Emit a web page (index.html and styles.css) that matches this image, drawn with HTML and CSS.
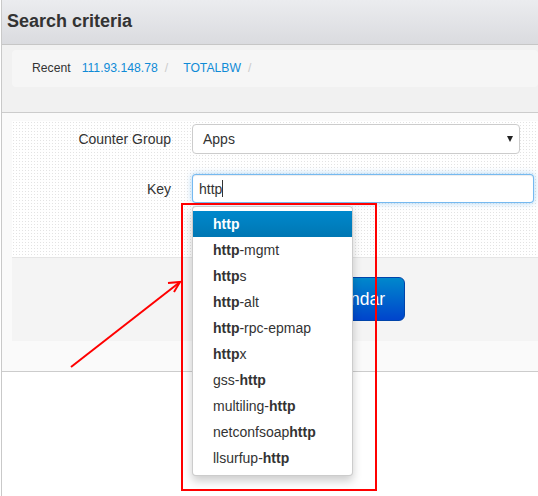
FILE: index.html
```html
<!DOCTYPE html>
<html>
<head>
<meta charset="utf-8">
<link rel="stylesheet" href="styles.css">
</head>
<body>
<div class="page">
  <div class="panel">
    <div class="panel-head"><h2 class="title">Search criteria</h2></div>
    <div class="recent-bar">
      <ul class="crumbs">
        <li class="crumb-label">Recent</li>
        <li><a href="#">111.93.148.78</a><span class="divider">/</span></li>
        <li><a href="#">TOTALBW</a><span class="divider">/</span></li>
      </ul>
    </div>
    <div class="panel-body">
      <form class="search-form">
        <div class="fields">
          <div class="field-row">
            <label class="field-label">Counter Group</label>
            <div class="select-box"><span>Apps</span><span class="select-caret"></span></div>
          </div>
          <div class="field-row">
            <label class="field-label">Key</label>
            <div class="control">
              <div class="text-input is-focused"><span>http</span><span class="text-cursor"></span></div>
              <ul class="typeahead">
                <li class="active"><strong>http</strong></li>
                <li><strong>http</strong>-mgmt</li>
                <li><strong>http</strong>s</li>
                <li><strong>http</strong>-alt</li>
                <li><strong>http</strong>-rpc-epmap</li>
                <li><strong>http</strong>x</li>
                <li>gss-<strong>http</strong></li>
                <li>multiling-<strong>http</strong></li>
                <li>netconfsoap<strong>http</strong></li>
                <li>llsurfup-<strong>http</strong></li>
              </ul>
            </div>
          </div>
        </div>
        <div class="form-actions">
          <button type="button" class="btn-primary">Calendar</button>
        </div>
      </form>
    </div>
  </div>
  <svg class="annotation" width="538" height="496" viewBox="0 0 538 496">
    <rect x="182" y="204" width="194" height="286" fill="none" stroke="#ff0000" stroke-width="2"/>
    <line x1="71" y1="367" x2="180" y2="282" stroke="#ff0000" stroke-width="2"/>
    <polyline points="168,283 180,282 174,292" fill="none" stroke="#ff0000" stroke-width="2"/>
  </svg>
</div>
</body>
</html>
```
FILE: styles.css
```css
html, body {
  margin: 0;
  padding: 0;
  background: #ffffff;
}

body {
  font-family: "Liberation Sans", Arial, sans-serif;
  color: #333333;
  font-size: 14px;
}

.page {
  position: relative;
  width: 538px;
  height: 496px;
  overflow: hidden;
  padding-left: 1px;
  box-sizing: border-box;
}

.panel {
  border-left: 1px solid #c9c9c9;
  height: 100%;
}

.panel-head {
  height: 45px;
  box-sizing: border-box;
  border-bottom: 1px solid #c6c6c6;
  background: linear-gradient(#ebecef, #dadbdf);
  padding-left: 5px;
}

.title {
  margin: 0;
  font-size: 18px;
  font-weight: bold;
  line-height: 43px;
  color: #333333;
}

.recent-bar {
  height: 68px;
  box-sizing: border-box;
  background: #f1f1f1;
  border-bottom: 1px solid #cccccc;
  padding: 5px 0 0 10px;
}

.crumbs {
  list-style: none;
  margin: 0;
  height: 37px;
  box-sizing: border-box;
  padding: 8px 20px;
  background: #f6f6f6;
  border-radius: 4px;
  display: flex;
  font-size: 12.2px;
  line-height: 21px;
}

.crumbs li {
  display: flex;
}

.crumb-label {
  color: #333333;
  margin-right: 11px;
}

.crumbs a {
  color: #0f8bd6;
  text-decoration: none;
}

.divider {
  color: #cccccc;
  margin: 0 15px 0 7px;
}

.panel-body {
  height: 259px;
  box-sizing: border-box;
  background: #fafafa;
  border-bottom: 1px solid #cccccc;
  padding: 8px 0 0 10px;
}

.search-form {
  margin: 0;
}

.fields {
  height: 136px;
  box-sizing: border-box;
  padding-top: 3px;
  background-color: #ffffff;
  background-image: radial-gradient(circle, #e3e3e3 0.7px, transparent 0.9px);
  background-size: 3px 3px;
}

.field-row {
  display: flex;
  align-items: flex-start;
  gap: 21px;
  margin-bottom: 20px;
}

.field-label {
  width: 159px;
  text-align: right;
  line-height: 20px;
  padding-top: 5px;
  color: #333333;
}

.select-box {
  width: 328px;
  height: 30px;
  box-sizing: border-box;
  border: 1px solid #cccccc;
  border-radius: 4px;
  background: #ffffff;
  display: flex;
  align-items: center;
  justify-content: space-between;
  padding: 0 6px 0 10px;
  line-height: 20px;
}

.select-caret {
  width: 0;
  height: 0;
  border-left: 3.5px solid transparent;
  border-right: 3.5px solid transparent;
  border-top: 6px solid #222222;
}

.control {
  position: relative;
}

.text-input {
  width: 342px;
  height: 29px;
  box-sizing: border-box;
  border: 1px solid rgba(82, 168, 236, 0.8);
  border-radius: 4px;
  background: #ffffff;
  box-shadow: inset 0 1px 1px rgba(0, 0, 0, 0.075), 0 0 6px rgba(82, 168, 236, 0.5);
  display: flex;
  align-items: center;
  padding: 0 6px;
  line-height: 20px;
  color: #333333;
}

.text-cursor {
  display: inline-block;
  width: 1px;
  height: 17px;
  background: #333333;
}

.typeahead {
  position: absolute;
  top: 32px;
  left: 0;
  z-index: 10;
  width: 161px;
  box-sizing: border-box;
  margin: 0;
  padding: 4px 0;
  list-style: none;
  background: #ffffff;
  border: 1px solid rgba(0, 0, 0, 0.2);
  border-radius: 4px;
  box-shadow: 0 5px 10px rgba(0, 0, 0, 0.2);
}

.typeahead li {
  padding: 3px 20px;
  line-height: 20px;
  white-space: nowrap;
  color: #333333;
}

.typeahead li.active {
  color: #ffffff;
  background: linear-gradient(#0088cc, #0077b3);
}

.form-actions {
  height: 84px;
  box-sizing: border-box;
  background: #f4f4f4;
  border-top: 1px solid #e5e5e5;
  padding: 19px 0 0 180px;
}

.btn-primary {
  width: 213px;
  height: 44px;
  box-sizing: border-box;
  border: 1px solid #0044aa;
  border-radius: 6px;
  background: linear-gradient(#0088cc, #0044cc);
  color: #ffffff;
  font-family: "Liberation Sans", Arial, sans-serif;
  font-size: 17.5px;
  line-height: 20px;
  padding: 11px 19px;
  text-align: right;
}

.annotation {
  position: absolute;
  left: 0;
  top: 0;
  z-index: 20;
  pointer-events: none;
}
```
